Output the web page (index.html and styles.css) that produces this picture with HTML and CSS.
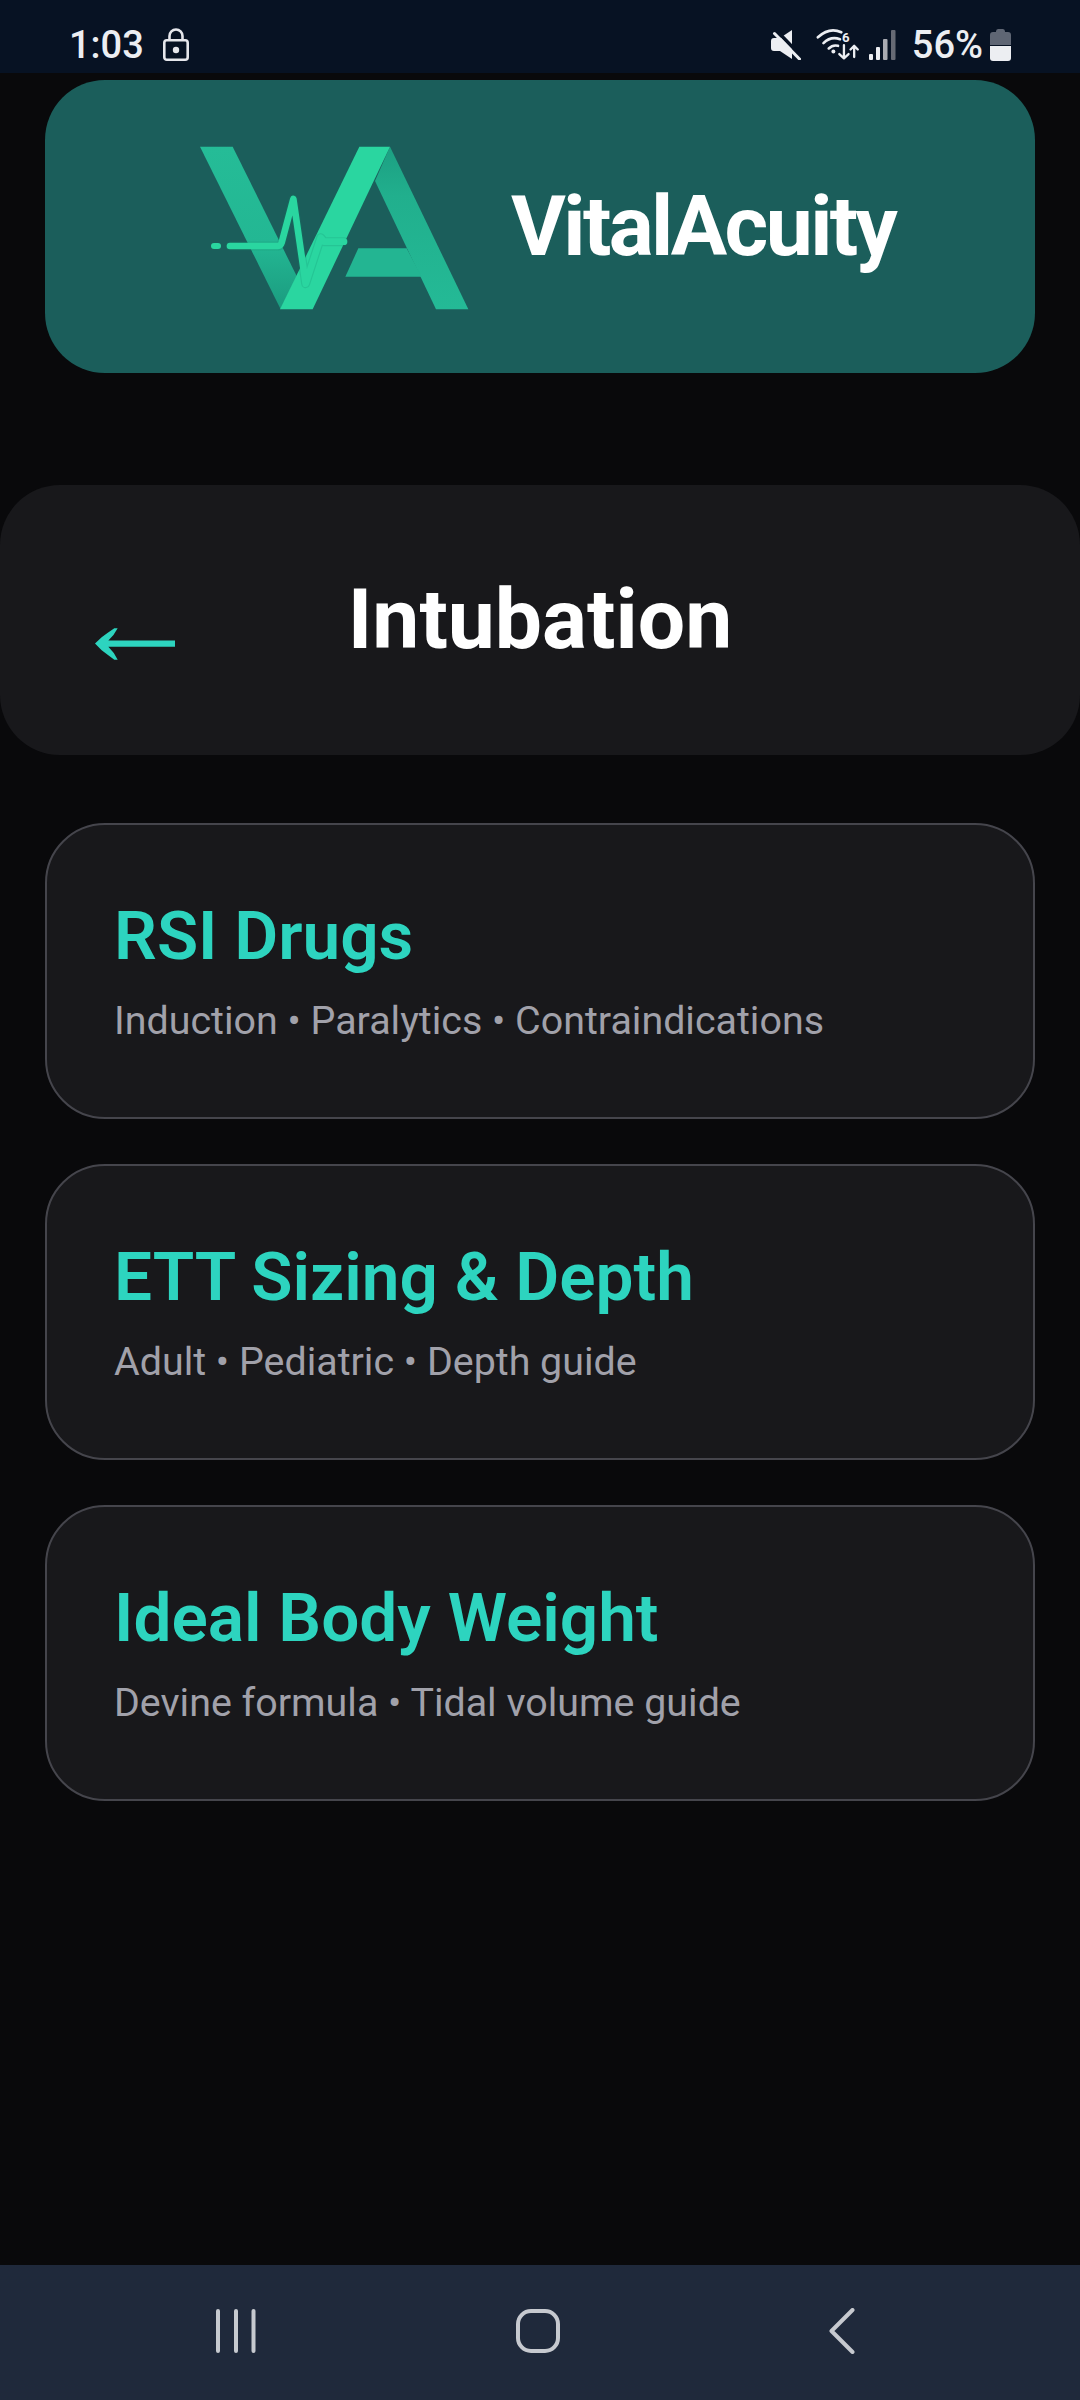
FILE: index.html
```html
<!DOCTYPE html>
<html lang="en">
<head>
<meta charset="utf-8">
<title>Intubation</title>
<link rel="stylesheet" href="styles.css">
</head>
<body>
<div class="phone">
  <div class="statusbar">
    <span class="time">1:03</span>
    <svg class="ic-lock" viewBox="0 0 26 33"><path d="M6.500 13V8a6.500 6.500 0 0 1 13 0v5" fill="none" stroke="#e6e7ec" stroke-width="2.600"/><rect x="1.300" y="12.300" width="23.400" height="19.400" rx="2.500" fill="none" stroke="#e6e7ec" stroke-width="2.600"/><circle cx="13" cy="22" r="3.200" fill="#e6e7ec"/></svg>
    <div class="status-right">
      <svg class="ic-mute" viewBox="0 0 30 30"><path d="M0 11q0-3 3-3h6L21 0V29L9 21H3q-3 0-3-3Z" fill="#eceef2"/><path d="M6 1 30 26" stroke="#071223" stroke-width="3.500"/><path d="M3.500 3.500 28.500 29" stroke="#eceef2" stroke-width="3" stroke-linecap="round"/></svg>
      <svg class="ic-wifi" viewBox="0 0 132 100"><g fill="none" stroke="#eceef2" stroke-width="8" stroke-linecap="round"><path d="M5 28Q40-4 76 13"/><path d="M22 46Q44 24 72 34"/><path d="M38 62Q50 50 66 54"/></g><circle cx="52" cy="71" r="6" fill="#eceef2"/><text x="78" y="42" class="wifi-num">6</text><g fill="none" stroke="#eceef2" stroke-width="7" stroke-linecap="round" stroke-linejoin="round"><path d="M84 52V92M70 79l14 13 14-13"/><path d="M115 88V54M104 65 115 54l11 11"/></g></svg>
      <svg class="ic-signal" viewBox="0 0 27 30"><g fill="#eceef2"><rect x="0" y="24" width="4" height="6" rx="1"/><rect x="7" y="17" width="4" height="13" rx="1"/></g><rect x="14" y="9" width="4.500" height="21" rx="1" fill="#a9abb2"/><rect x="22" y="0" width="4.500" height="30" rx="1" fill="#666a74"/></svg>
      <span class="pct">56%</span>
      <svg class="ic-batt" viewBox="0 0 21 32"><path d="M6 2.500Q6 0 8 0h5q2 0 2 2.500V3h3q3 0 3 3v10H0V6q0-3 3-3h3z" fill="#5f6674"/><path d="M0 17h21v12q0 3-3 3H3q-3 0-3-3z" fill="#eceef2"/></svg>
    </div>
  </div>

  <main class="content">
    <header class="brand">
      <svg class="brand-logo" viewBox="0 0 1020 660">
        <defs>
          <linearGradient id="legL" x1="0" y1="0" x2="0" y2="1"><stop offset="0" stop-color="#25bc97"/><stop offset=".6" stop-color="#23b793"/><stop offset="1" stop-color="#1b9b7f"/></linearGradient>
          <linearGradient id="legA" x1="0" y1="0" x2="0" y2="1"><stop offset="0" stop-color="#1c9f82"/><stop offset=".3" stop-color="#21af8d"/><stop offset="1" stop-color="#24ba96"/></linearGradient>
        </defs>
        <path d="M120 107H218L410 495 362 595Z" fill="url(#legL)"/>
        <path d="M690 107 925 595H828L645 210Z" fill="url(#legA)"/>
        <path d="M595 412H740L785 497H556Z" fill="#23b592"/>
        <path d="M360 595H458L690 107H598Z" fill="#2ad6a0"/>
        <rect x="153" y="396" width="30" height="18" rx="9" fill="#2ad6a0"/>
        <path d="M210 405H354Q362 405 365 395L400 264 437 518 482 380 492 392H552" fill="none" stroke="#14806a" stroke-opacity=".2" stroke-width="27" stroke-linejoin="round" stroke-linecap="round"/>
        <path d="M210 405H354Q362 405 365 395L400 264 437 518 482 380 492 392H552" fill="none" stroke="#2ad6a0" stroke-width="20" stroke-linejoin="round" stroke-linecap="round"/>
      </svg>
      <span class="brand-name">VitalAcuity</span>
    </header>

    <section class="titlebar">
      <svg class="back-arrow" viewBox="0 0 240 95"><path d="M0 46 20 27Q40 12 58 0H68Q58 20 40 37H240V56H40Q58 73 68 95H58Q40 81 20 66Z" fill="#2dd4bf"/></svg>
      <h1 class="title">Intubation</h1>
    </section>

    <nav class="cards">
      <a class="card"><h2 class="card-title">RSI Drugs</h2><p class="card-sub">Induction • Paralytics • Contraindications</p></a>
      <a class="card"><h2 class="card-title">ETT Sizing &amp; Depth</h2><p class="card-sub">Adult • Pediatric • Depth guide</p></a>
      <a class="card"><h2 class="card-title">Ideal Body Weight</h2><p class="card-sub">Devine formula • Tidal volume guide</p></a>
    </nav>
  </main>

  <footer class="navbar">
    <svg class="nav-recents" viewBox="0 0 40 44"><path d="M2 2V42M20 2V42M37.500 2V42" stroke="#c6c9cf" stroke-width="4" stroke-linecap="round"/></svg>
    <svg class="nav-home" viewBox="0 0 44 44"><rect x="2" y="2" width="40" height="40" rx="13" fill="none" stroke="#c6c9cf" stroke-width="4"/></svg>
    <svg class="nav-back" viewBox="0 0 26 46"><path d="M23.500 2 2.500 23 23.500 44" fill="none" stroke="#c6c9cf" stroke-width="4" stroke-linecap="round" stroke-linejoin="round"/></svg>
  </footer>
</div>
</body>
</html>
```

FILE: styles.css
```css
* { box-sizing: border-box; }
html, body { margin: 0; padding: 0; background: #09090b; }
body { font-family: Roboto, "Noto Sans", sans-serif; color: #fff; }

.phone { width: 1080px; height: 2400px; display: flex; flex-direction: column; overflow: hidden; background: #09090b; }

.statusbar { height: 73px; flex: none; background: #071223; display: flex; align-items: center; padding: 16px 69px 0 69px; color: #eceef2; }
.time { font-size: 38px; font-weight: 500; line-height: 1; width: 94px; }
.ic-lock { width: 26px; height: 33px; }
.status-right { margin-left: auto; display: flex; align-items: center; }
.ic-mute { width: 30px; height: 30px; margin-right: 15px; }
.ic-wifi { width: 44px; height: 33px; margin-right: 9px; }
.wifi-num { font-family: Roboto, sans-serif; font-size: 40px; font-weight: 700; fill: #eceef2; }
.ic-signal { width: 27px; height: 30px; margin-right: 16px; }
.pct { font-size: 38px; font-weight: 500; line-height: 1; margin-right: 7px; }
.ic-batt { width: 21px; height: 32px; }

.content { flex: 1; display: flex; flex-direction: column; }

.brand { margin: 7px 45px 0; height: 293px; border-radius: 60px; background: #1b5e5b; display: flex; align-items: center; padding-left: 115px; }
.brand-logo { width: 340px; height: 220px; flex: none; margin-bottom: 12px; }
.brand-name { font-size: 84px; font-weight: 700; letter-spacing: -2.6px; margin-left: 11px; }

.titlebar { margin-top: 112px; height: 270px; border-radius: 60px; background: #18181b; display: grid; grid-template-columns: 1fr auto 1fr; align-items: center; }
.back-arrow { width: 80px; height: 32px; margin: 48px 0 0 95px; }
.title { margin: 0; font-size: 84px; font-weight: 700; line-height: 1; }

.cards { margin: 68px 45px 0; display: flex; flex-direction: column; gap: 45px; }
.card { height: 296px; border: 2px solid #45454c; border-radius: 60px; background: #18181b; padding: 72px 67px 0; display: block; }
.card-title { margin: 0; font-size: 67.5px; font-weight: 600; line-height: 78px; color: #2dd4bf; }
.card-sub { margin: 23px 0 0; font-size: 39.4px; font-weight: 400; line-height: 46px; color: #a1a1aa; }

.navbar { height: 135px; flex: none; background: #1f293b; display: flex; align-items: center; padding: 0 0 3px 216px; }
.nav-recents { width: 40px; height: 44px; }
.nav-home { width: 44px; height: 44px; margin-left: 260px; }
.nav-back { width: 26px; height: 46px; margin-left: 269px; }
```
